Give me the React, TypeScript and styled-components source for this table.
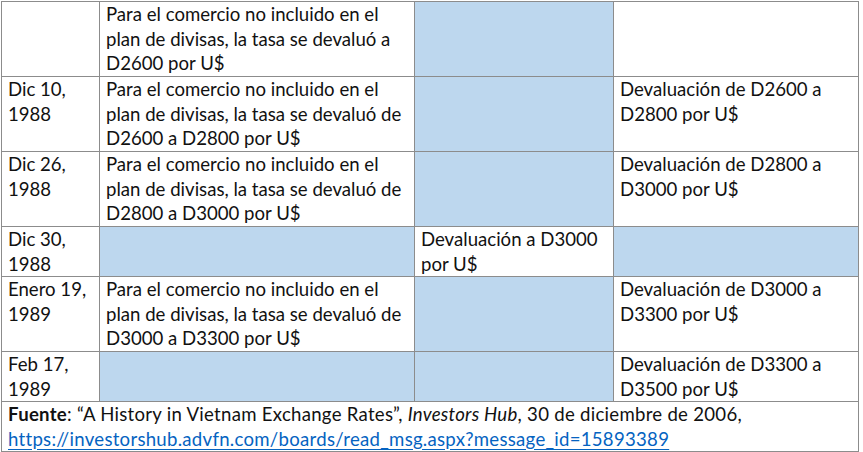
import styled, { createGlobalStyle } from 'styled-components';

const GlobalStyle = createGlobalStyle`
  html, body {
    margin: 0;
    padding: 0;
    background: #ffffff;
  }
  body {
    font-family: Lato, "Open Sans", "Liberation Sans", sans-serif;
    color: #111111;
  }
`;

const Page = styled.div`
  padding: 1px 0 0 1px;
`;

const Table = styled.table`
  border-collapse: collapse;
  table-layout: fixed;
  width: 857px;
  font-size: 18.6px;
  line-height: 24.5px;
`;

const Cell = styled.td<{ $shaded?: boolean }>`
  border: 1px solid #8c8c8c;
  padding: 0 7px 0 6px;
  vertical-align: top;
  white-space: nowrap;
  background: ${p => (p.$shaded ? '#bdd7ee' : '#ffffff')};
`;

const Row = styled.tr<{ $lines: number }>`
  height: ${p => (p.$lines === 3 ? 75 : 49)}px;
`;

const Footer = styled(Cell)`
  letter-spacing: 0.27px;
`;

const Bold = styled.b`
  font-weight: 700;
`;

const Link = styled.a`
  color: #0563c1;
  text-decoration: underline;
  text-underline-offset: 3px;
`;

type Entry = { date?: string[]; a?: string[]; b?: string[]; c?: string[]; lines: number };

const rows: Entry[] = [
  {
    lines: 3,
    a: ['Para el comercio no incluido en el', 'plan de divisas, la tasa se devaluó a', 'D2600 por U$'],
  },
  {
    lines: 3,
    date: ['Dic 10,', '1988'],
    a: ['Para el comercio no incluido en el', 'plan de divisas, la tasa se devaluó de', 'D2600 a D2800 por U$'],
    c: ['Devaluación de D2600 a', 'D2800 por U$'],
  },
  {
    lines: 3,
    date: ['Dic 26,', '1988'],
    a: ['Para el comercio no incluido en el', 'plan de divisas, la tasa se devaluó de', 'D2800 a D3000 por U$'],
    c: ['Devaluación de D2800 a', 'D3000 por U$'],
  },
  {
    lines: 2,
    date: ['Dic 30,', '1988'],
    b: ['Devaluación a D3000', 'por U$'],
  },
  {
    lines: 3,
    date: ['Enero 19,', '1989'],
    a: ['Para el comercio no incluido en el', 'plan de divisas, la tasa se devaluó de', 'D3000 a D3300 por U$'],
    c: ['Devaluación de D3000 a', 'D3300 por U$'],
  },
  {
    lines: 2,
    date: ['Feb 17,', '1989'],
    c: ['Devaluación de D3300 a', 'D3500 por U$'],
  },
];

const Lines = ({ text }: { text?: string[] }) => (
  <>
    {text?.map((t, i) => (
      <div key={i}>{t}</div>
    ))}
  </>
);

export default function App() {
  return (
    <Page>
      <GlobalStyle />
      <Table>
        <colgroup>
          <col style={{ width: 98 }} />
          <col style={{ width: 315 }} />
          <col style={{ width: 199 }} />
          <col style={{ width: 245 }} />
        </colgroup>
        <tbody>
          {rows.map((r, i) => (
            <Row key={i} $lines={r.lines}>
              <Cell>
                <Lines text={r.date} />
              </Cell>
              <Cell $shaded={!r.a}>
                <Lines text={r.a} />
              </Cell>
              <Cell $shaded={!r.b}>
                <Lines text={r.b} />
              </Cell>
              <Cell $shaded={!r.c && i > 0}>
                <Lines text={r.c} />
              </Cell>
            </Row>
          ))}
          <Row $lines={2}>
            <Footer colSpan={4}>
              <div>
                <Bold>Fuente</Bold>: “A History in Vietnam Exchange Rates”, <i>Investors Hub</i>, 30 de
                diciembre de 2006,
              </div>
              <div>
                <Link href="#">https://investorshub.advfn.com/boards/read_msg.aspx?message_id=15893389</Link>
              </div>
            </Footer>
          </Row>
        </tbody>
      </Table>
    </Page>
  );
}
